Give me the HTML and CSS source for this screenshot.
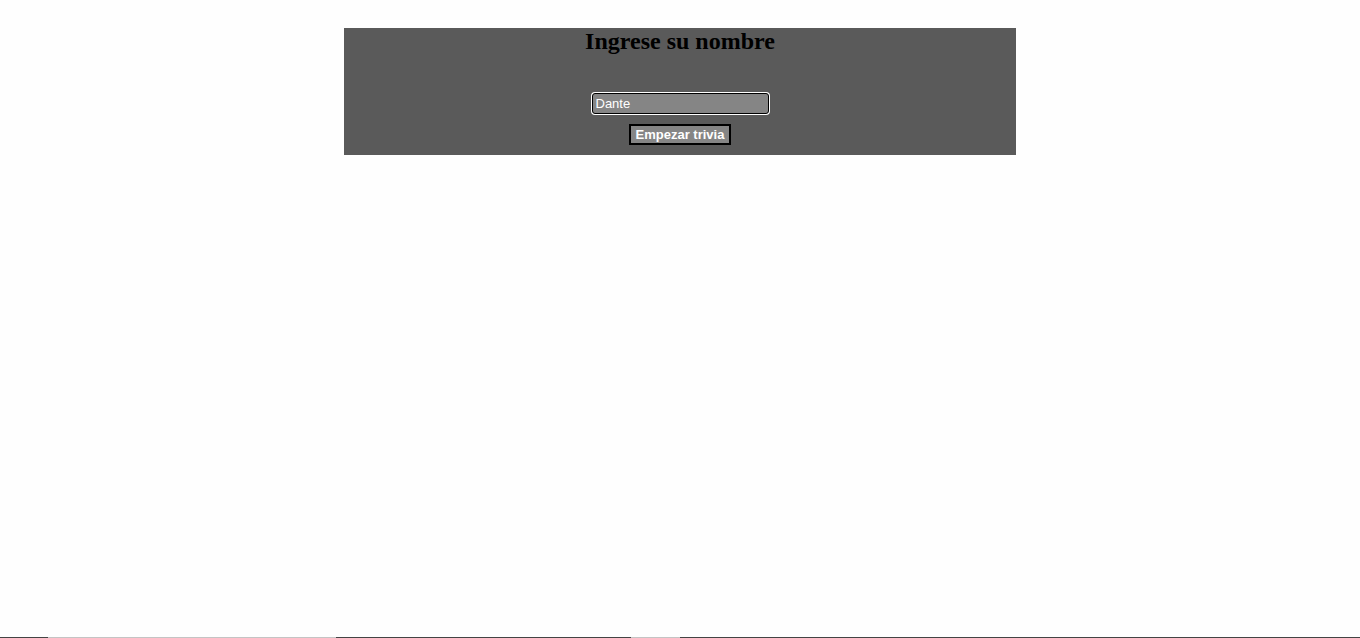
FILE: index.html
```html
<!DOCTYPE html>
<html lang="es">
<head>
<meta charset="utf-8">
<title>Trivia</title>
<link rel="stylesheet" href="styles.css">
</head>
<body>
<main class="panel">
  <h2 class="title">Ingrese su nombre</h2>
  <form class="form">
    <input class="name" type="text" value="Dante">
    <button class="start" type="button">Empezar trivia</button>
  </form>
</main>
<div class="edge">
  <span class="seg dark" style="width:48px"></span>
  <span class="seg light" style="width:288px"></span>
  <span class="seg dark" style="width:295px"></span>
  <span class="seg light" style="width:49px"></span>
  <span class="seg dark fill"></span>
</div>
</body>
</html>
```
FILE: styles.css
```css
html, body {
  margin: 0;
  padding: 0;
  background: #fefefe;
}
body {
  padding-top: 28px;
}
.panel {
  width: 672px;
  height: 127px;
  margin: 0 auto;
  background: #5a5a5a;
  display: flex;
  flex-direction: column;
  align-items: center;
  box-sizing: border-box;
}
.title {
  margin: 0;
  font-family: "Liberation Serif", "Times New Roman", serif;
  font-size: 24px;
  font-weight: bold;
  color: #000;
  line-height: 26px;
}
.form {
  margin-top: 39px;
  display: flex;
  flex-direction: column;
  align-items: center;
  gap: 10px;
}
.name {
  width: 177px;
  height: 21px;
  box-sizing: border-box;
  background: #858585;
  color: #fff;
  border: 1px solid #000;
  border-radius: 3px;
  box-shadow: 0 0 0 1px #fff;
  padding: 0 3px;
  font-family: "Liberation Sans", Arial, sans-serif;
  font-size: 13px;
  outline: none;
}
.start {
  width: 102px;
  height: 21px;
  box-sizing: border-box;
  background: #858585;
  color: #fff;
  border: 2px solid #000;
  font-family: "Liberation Sans", Arial, sans-serif;
  font-size: 13px;
  font-weight: bold;
  padding: 0;
}
.edge {
  position: fixed;
  left: 0;
  right: 0;
  bottom: 0;
  height: 1px;
  display: flex;
}
.seg { height: 1px; }
.dark { background: #444; }
.light { background: #c4c4c4; }
.fill { flex: 1; }
```
